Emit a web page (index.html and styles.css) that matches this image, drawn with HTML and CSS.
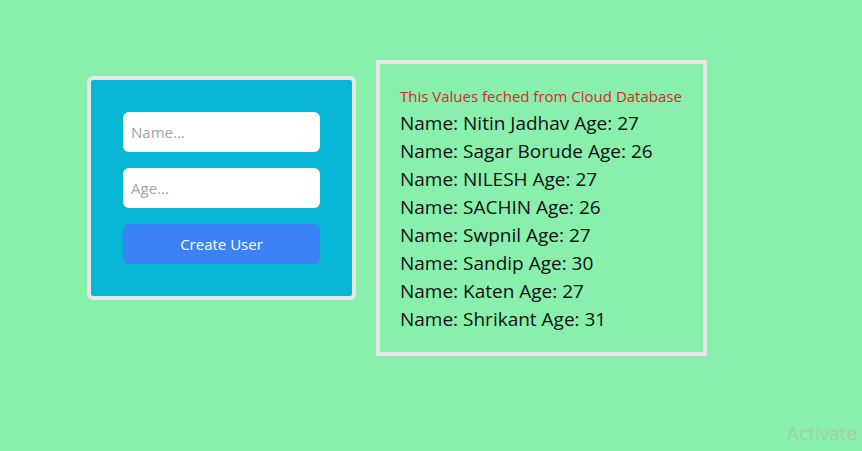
FILE: index.html
```html
<!DOCTYPE html>
<html lang="en">
<head>
<meta charset="utf-8">
<title>Users</title>
<link rel="stylesheet" href="styles.css">
</head>
<body>
<div class="page">
  <form class="card">
    <input class="field" type="text" placeholder="Name...">
    <input class="field" type="number" placeholder="Age...">
    <button class="btn" type="button">Create User</button>
  </form>
  <div class="list">
    <p class="note">This Values feched from Cloud Database</p>
    <ul class="users">
      <li>Name: Nitin Jadhav Age: 27</li>
      <li>Name: Sagar Borude Age: 26</li>
      <li>Name: NILESH Age: 27</li>
      <li>Name: SACHIN Age: 26</li>
      <li>Name: Swpnil Age: 27</li>
      <li>Name: Sandip Age: 30</li>
      <li>Name: Katen Age: 27</li>
      <li>Name: Shrikant Age: 31</li>
    </ul>
  </div>
</div>
<div class="watermark">Activate</div>
</body>
</html>
```
FILE: styles.css
```css
* { box-sizing: border-box; }
html, body {
  margin: 0;
  height: 100%;
  overflow: hidden;
}
body {
  background: #88efac;
  font-family: "Open Sans", "Noto Sans", sans-serif;
  position: relative;
}
.page {
  display: flex;
  align-items: flex-start;
  gap: 20px;
  padding: 60px 0 0 87px;
}
.card {
  margin: 16px 0 0 0;
  width: 269px;
  background: #06b6d4;
  border: 4px solid #e5e7eb;
  border-radius: 6px;
  padding: 32px;
  display: flex;
  flex-direction: column;
  gap: 16px;
}
.field {
  height: 40px;
  width: 100%;
  border: none;
  border-radius: 6px;
  background: #fff;
  padding: 0 8px;
  font-family: inherit;
  font-size: 15px;
  color: #111;
  outline: none;
}
.field::placeholder { color: #9ca3af; }
.field::-webkit-outer-spin-button,
.field::-webkit-inner-spin-button { -webkit-appearance: none; margin: 0; }
.btn {
  height: 40px;
  width: 100%;
  border: none;
  border-radius: 6px;
  background: #3b82f6;
  color: #fff;
  font-family: inherit;
  font-size: 15px;
}
.list {
  width: 331px;
  border: 4px solid #e6e6e6;
  padding: 22px 20px 19px 20px;
}
.note {
  margin: 0 0 3px 0;
  font-size: 15px;
  line-height: 20px;
  color: #dc2626;
  white-space: nowrap;
}
.users {
  list-style: none;
  margin: 0;
  padding: 0;
  font-size: 19px;
  line-height: 28px;
  color: #111;
  white-space: nowrap;
}
.watermark {
  position: absolute;
  left: 787px;
  top: 420px;
  font-size: 19px;
  color: #a9c9b3;
  white-space: nowrap;
}
```
